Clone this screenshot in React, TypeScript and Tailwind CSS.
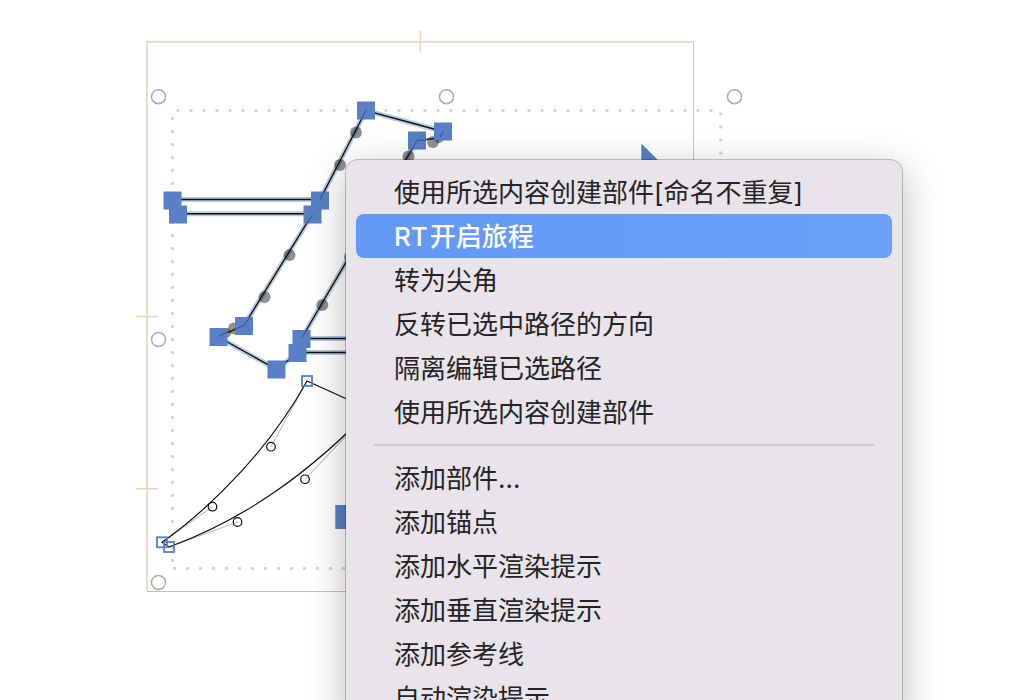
import React from "react";

type Point = [number, number];

const BLUE = "#5780c5";

const selectedNodes: Point[] = [
  [366, 110.5],
  [443, 131.5],
  [417, 140.5],
  [320, 200.5],
  [312.5, 214.5],
  [172.5, 200.5],
  [178, 214.5],
  [244, 326],
  [218.5, 337],
  [276.5, 369.5],
  [301.5, 339],
  [297.5, 353],
];

const offCurvePoints: Point[] = [
  [356, 132.5],
  [340, 165],
  [408.5, 156.5],
  [433, 142],
  [289.5, 255],
  [264.5, 297],
  [350, 257],
  [322.3, 305],
  [234, 328.5],
];

const transformHandles: Point[] = [
  [158.5, 96.7],
  [446.5, 96.7],
  [734.5, 96.7],
  [158.5, 339.5],
  [158.5, 582.5],
];

const curveHandles: Point[] = [
  [271, 446.7],
  [212.5, 506.7],
  [237.5, 522],
  [305, 479.3],
];

const openNodes: Point[] = [
  [307, 381],
  [162, 542.3],
  [169, 547],
];

const strokePath =
  "M172.5 199.5H320L366 110.5L443 131.5M417 140.5L301.5 338.5H420M297.5 352.5H420M178 213.8H312.5L244 325.5M218.5 337L276.5 369.5L297.5 353";

const shortStrokes = "M443 131.5L439 138L417 140.5M244 325.5L218.5 336.5";

const menuGroups: string[][] = [
  [
    "使用所选内容创建部件[命名不重复]",
    "RT开启旅程",
    "转为尖角",
    "反转已选中路径的方向",
    "隔离编辑已选路径",
    "使用所选内容创建部件",
  ],
  [
    "添加部件...",
    "添加锚点",
    "添加水平渲染提示",
    "添加垂直渲染提示",
    "添加参考线",
    "自动渲染提示",
  ],
];

function GlyphCanvas() {
  return (
    <svg className="absolute top-0 left-0" width="1036" height="700" viewBox="0 0 1036 700" fill="none" aria-hidden="true">
      <path d="M147 591V42" stroke="#ebdccd" strokeWidth="2" />
      <path d="M146 41.8H693.5" stroke="#e6d6c0" strokeWidth="1.5" />
      <path d="M693.5 41.5V591.5" stroke="#d9c4b0" />
      <path d="M147 591.5H693.5" stroke="#cdbf9f" />
      <path d="M420.3 31V52.5M136 316.5H158M136 488.7H158" stroke="#e8d4b9" strokeWidth="1.5" />

      <g stroke="#d6d6d6" strokeWidth="3" strokeDasharray="3 10">
        <path d="M176.5 110.5H714" />
        <path d="M172.5 117V563" />
        <path d="M720.7 112.5V560" />
        <path d="M173 568.5H714" />
      </g>

      {transformHandles.map(([x, y]) => (
        <circle key={`${x}-${y}`} cx={x} cy={y} r="7" fill="#fff" stroke="#adadad" strokeWidth="1.5" />
      ))}

      <path d={strokePath} stroke="#b6cbe2" strokeWidth="5" />
      <g fill="#000" fillOpacity="0.43">
        <circle cx="439" cy="138" r="5" />
        <circle cx="226" cy="333" r="5" />
        {offCurvePoints.map(([x, y]) => (
          <circle key={`${x}-${y}`} cx={x} cy={y} r="6" />
        ))}
      </g>
      <path d={strokePath} stroke="#111" strokeWidth="1.4" />
      <path d={shortStrokes} stroke="#222" strokeWidth="1.4" />
      {selectedNodes.map(([x, y]) => (
        <rect key={`${x}-${y}`} x={x - 9} y={y - 9} width="18" height="18" fill={BLUE} />
      ))}
      <path
        d="M366 110.5L361 120M320 199.5L325 190M312.5 214.5L307 223M244 325.5L250 317M244 325.5L235 329M218.5 336.5L227 332M301.5 338.5L307 329M417 140.5L412 150M417 140L426 140.5M443 131.5L440 137"
        stroke="#2b3f61"
        strokeWidth="1"
        strokeOpacity="0.75"
      />

      <path d="M307 381L271 446.7M162 542.3L212.5 506.7M169 547L237.5 522M305 479.3L380 400" stroke="#c4c4c4" strokeWidth="1.2" />
      <path
        d="M380 414L307 381C271 446.7 212.5 506.7 162 542.3L169 547C237.5 522 305 479.3 380 400"
        stroke="#111"
        strokeWidth="1.2"
      />
      {curveHandles.map(([x, y]) => (
        <circle key={`${x}-${y}`} cx={x} cy={y} r="4.3" stroke="#111" strokeWidth="1.2" />
      ))}
      {openNodes.map(([x, y]) => (
        <rect key={`${x}-${y}`} x={x - 5} y={y - 5} width="10" height="10" stroke={BLUE} strokeWidth="1.8" />
      ))}

      <rect x="335.3" y="505" width="24" height="24" fill={BLUE} />
      <path d="M641.3 143.5V168H666Z" fill={BLUE} />
    </svg>
  );
}

function MenuLabel({ label }: { label: string }) {
  const latin = label.match(/^[A-Za-z]+/)?.[0] ?? "";
  if (!latin) return <>{label}</>;
  return (
    <>
      <span>{latin}</span>
      <span>{label.slice(latin.length)}</span>
    </>
  );
}

function ContextMenu() {
  return (
    <div
      role="menu"
      className="absolute top-[160px] left-[346px] w-[556px] rounded-xl bg-[#e8e4e9] p-[10px] shadow-[0_0_0_1px_rgba(0,0,0,0.22),0_10px_38px_rgba(0,0,0,0.28)]"
    >
      {menuGroups.map((group, groupIndex) => (
        <React.Fragment key={group[0]}>
          {groupIndex > 0 && <div role="separator" className="mx-[18px] my-[10px] h-[2px] bg-[#cfcad0]" />}
          {group.map((label) => {
            const active = label.startsWith("RT");
            return (
              <button
                key={label}
                type="button"
                role="menuitem"
                className={
                  active
                    ? "flex h-11 w-full items-center gap-0.5 rounded-lg bg-linear-to-r from-[#6398f6] to-[#6c9ff8] px-[38px] pt-[2px] text-left text-[26px] leading-[42px] font-medium whitespace-nowrap text-white"
                    : "flex h-11 w-full items-center gap-0.5 rounded-lg px-[38px] pt-[2px] text-left text-[26px] leading-[42px] whitespace-nowrap text-[#242326]"
                }
              >
                <MenuLabel label={label} />
              </button>
            );
          })}
        </React.Fragment>
      ))}
    </div>
  );
}

export default function App() {
  return (
    <main className="relative h-screen w-full overflow-hidden bg-white font-['Inter','Noto_Sans_CJK_SC',sans-serif]">
      <GlyphCanvas />
      <ContextMenu />
    </main>
  );
}
